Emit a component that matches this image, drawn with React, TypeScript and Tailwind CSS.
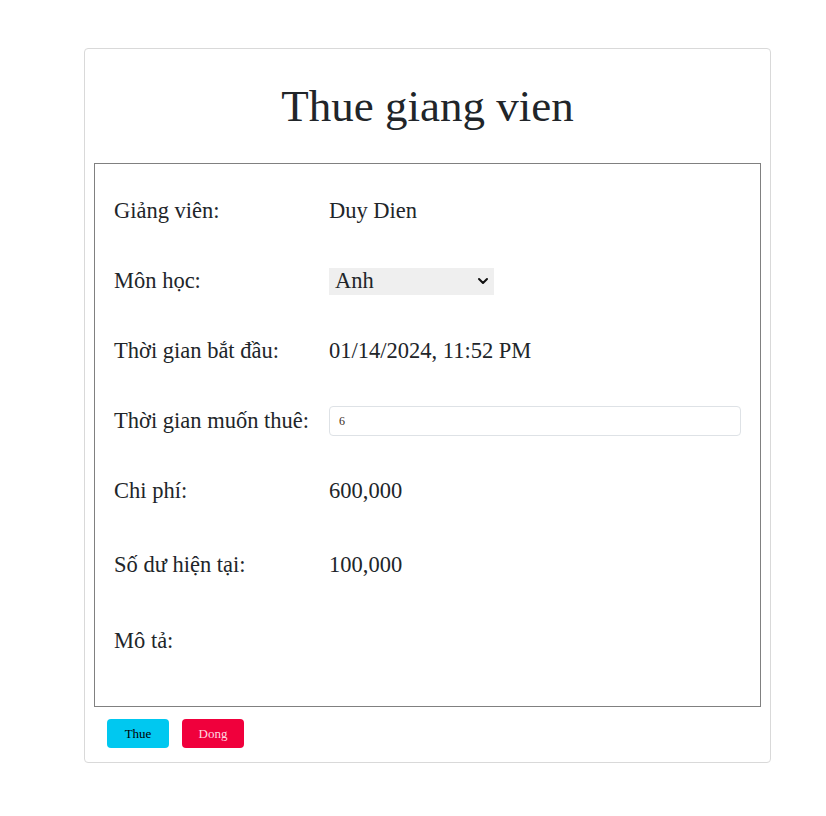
import React from 'react';

const rows: { label: string; h: string; value: React.ReactNode }[] = [
  { label: 'Giảng viên:', h: 'h-[70px]', value: 'Duy Dien' },
  {
    label: 'Môn học:',
    h: 'h-[70px]',
    value: (
      <div className="flex items-center justify-between w-[165px] h-[27px] bg-[#efefef] pl-[6px] pr-[5px]">
        <span>Anh</span>
        <svg width="12" height="12" viewBox="0 0 12 12" fill="none">
          <path d="M2 4l4 4 4-4" stroke="#111" strokeWidth="2" strokeLinecap="round" strokeLinejoin="round" />
        </svg>
      </div>
    ),
  },
  { label: 'Thời gian bắt đầu:', h: 'h-[70px]', value: '01/14/2024, 11:52 PM' },
  {
    label: 'Thời gian muốn thuê:',
    h: 'h-[70px]',
    value: (
      <div className="w-full h-[30px] border border-[#dee2e6] rounded-[4px] flex items-center pl-[9px] text-[12px] text-[#3a2a22]">
        6
      </div>
    ),
  },
  { label: 'Chi phí:', h: 'h-[70px]', value: '600,000' },
  { label: 'Số dư hiện tại:', h: 'h-[78px]', value: '100,000' },
  { label: 'Mô tả:', h: 'h-[74px]', value: '' },
];

export default function App() {
  return (
    <div className="min-h-[816px] bg-white font-['Liberation_Serif',serif] text-[#212529]">
      <div className="pt-[48px] pl-[84px]">
        <div className="w-[687px] border border-[#d9d9d9] rounded-[4px] pb-[14px]">
          <h1 className="h-[114px] flex items-center justify-center text-[45px] pt-[2px]">Thue giang vien</h1>
          <div className="mx-[9px] border border-[#808080] pt-[12px] pb-[28px] pl-[19px] pr-[19px]">
            {rows.map(r => (
              <div key={r.label} className={`flex items-center ${r.h} text-[22.5px]`}>
                <div className="w-[215px] shrink-0">{r.label}</div>
                <div className="flex-1">{r.value}</div>
              </div>
            ))}
          </div>
          <div className="flex gap-[13px] pl-[22px] pt-[12px]">
            <button className="w-[62px] h-[29px] rounded-[4px] bg-[#00c8f0] text-[13px] text-black">Thue</button>
            <button className="w-[62px] h-[29px] rounded-[4px] bg-[#f0003c] text-[13px] text-[#ffd6e0]">Dong</button>
          </div>
        </div>
      </div>
    </div>
  );
}
